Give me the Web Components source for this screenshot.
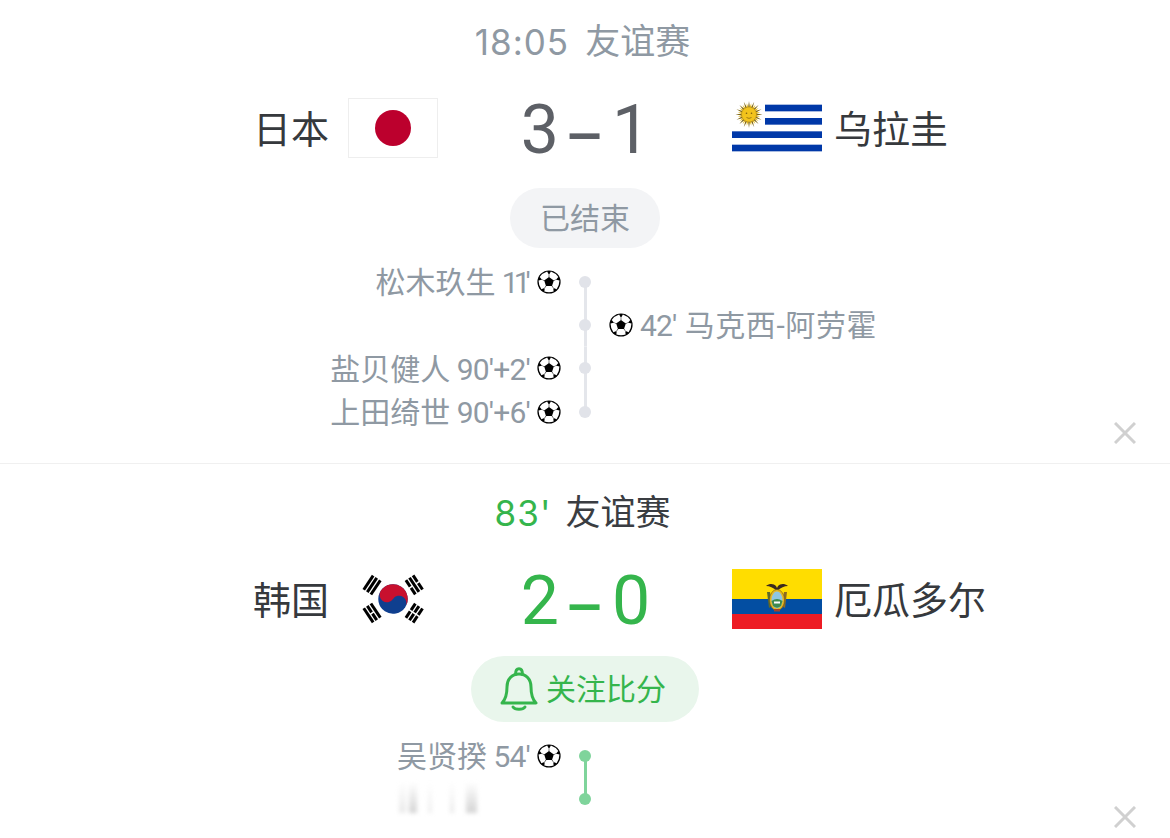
<!DOCTYPE html>
<html lang="zh">
<head>
<meta charset="utf-8">
<title>比分</title>
<style>
  html, body { margin: 0; height: 838px; overflow: hidden; background: #fff; }
  body { font-family: Roboto, "Noto Sans CJK SC", sans-serif; }
</style>
</head>
<body>
<match-card time="18:05" league="友谊赛" style="--pad-top: 21px; --pill-gap: 30px; --close-top: 422px; --card-h: 463px" divider>
  <team-side slot="home" side="home" name="日本"><country-flag code="jp"></country-flag></team-side>
  <score-line slot="score" home="3" away="1"></score-line>
  <team-side slot="away" side="away" name="乌拉圭"><country-flag code="uy"></country-flag></team-side>
  <status-pill slot="status">已结束</status-pill>
  <goal-row slot="events" side="home" minute="11'" first style="--min-track: -5px; --min-end: 4.2px">松木玖生</goal-row>
  <goal-row slot="events" side="away" minute="42'">马克西-阿劳霍</goal-row>
  <goal-row slot="events" side="home" minute="90'+2'">盐贝健人</goal-row>
  <goal-row slot="events" side="home" minute="90'+6'" last>上田绮世</goal-row>
</match-card>
<match-card time="83'" league="友谊赛" live style="--pad-top: 28px; --pill-gap: 27px; --close-top: 342px; --card-h: 374px; --head-gap: 14px">
  <team-side slot="home" side="home" name="韩国"><country-flag code="kr"></country-flag></team-side>
  <score-line slot="score" home="2" away="0"></score-line>
  <team-side slot="away" side="away" name="厄瓜多尔"><country-flag code="ec"></country-flag></team-side>
  <status-pill slot="status" follow>关注比分</status-pill>
  <goal-row slot="events" side="home" minute="54'" first>吴贤揆</goal-row>
  <goal-row slot="events" side="home" last ghost></goal-row>
</match-card>

<script>
const cjk = `"Noto Sans CJK SC", sans-serif`;

class MatchCard extends HTMLElement {
  constructor() {
    super();
    this.attachShadow({ mode: 'open' }).innerHTML = `
      <style>
        :host {
          display: block;
          position: relative;
          height: var(--card-h);
          --rail: #e4e6eb;
          --dot: #e1e3e9;
          font-family: Roboto, ${cjk};
        }
        :host([divider]) { border-bottom: 1px solid #f0f0f0; }
        :host([live]) { --rail: #7fd49b; --dot: #7fd49b; }
        .wrap { padding-top: var(--pad-top); display: flex; flex-direction: column; align-items: center; }
        header {
          box-sizing: border-box;
          height: 42px;
          padding: 2px 5px 0 0;
          line-height: 40px;
          font-size: 35px;
          color: #8f99a3;
          display: flex;
          gap: var(--head-gap, 16px);
          white-space: nowrap;
        }
        .time { font-family: Inter, ${cjk}; letter-spacing: 1px; line-height: 38px; }
        :host([live]) .time { color: #35b54c; }
        :host([live]) .league { color: #3a3d42; }
        .teams {
          margin-top: 35px;
          width: 100%;
          display: grid;
          grid-template-columns: 1fr 294px 1fr;
          grid-template-rows: 60px;
          align-items: center;
        }
        .status { margin-top: var(--pill-gap); }
        .events {
          margin-top: 12px;
          width: 100%;
          display: grid;
          grid-auto-rows: 43.33px;
        }
        .close {
          position: absolute;
          top: var(--close-top);
          right: 34px;
          width: 22px;
          height: 22px;
        }
      </style>
      <div class="wrap">
        <header><span class="time"></span><span class="league"></span></header>
        <div class="teams">
          <slot name="home"></slot>
          <slot name="score"></slot>
          <slot name="away"></slot>
        </div>
        <div class="status"><slot name="status"></slot></div>
        <div class="events"><slot name="events"></slot></div>
      </div>
      <svg class="close" viewBox="0 0 22 22"><path d="M1 1 21 21M21 1 1 21" stroke="#d0d0d0" stroke-width="3" fill="none"/></svg>`;
  }

  connectedCallback() {
    this.shadowRoot.querySelector('.time').textContent = this.getAttribute('time');
    this.shadowRoot.querySelector('.league').textContent = this.getAttribute('league');
  }
}

class TeamSide extends HTMLElement {
  constructor() {
    super();
    this.attachShadow({ mode: 'open' }).innerHTML = `
      <style>
        :host { display: flex; align-items: center; height: 60px; font-size: 38px; color: #36393d; white-space: nowrap; }
        :host([side="home"]) { justify-content: flex-end; gap: 19px; }
        :host([side="away"]) { flex-direction: row-reverse; justify-content: flex-end; gap: 12px; }
        .name { line-height: 44px; padding-top: 4px; }
      </style>
      <span class="name"></span><slot></slot>`;
  }

  connectedCallback() {
    this.shadowRoot.querySelector('.name').textContent = this.getAttribute('name');
  }
}

class ScoreLine extends HTMLElement {
  constructor() {
    super();
    this.attachShadow({ mode: 'open' }).innerHTML = `
      <style>
        :host {
          display: grid;
          box-sizing: border-box;
          height: 60px;
          padding-top: 4px;
          grid-template-columns: 1fr 30px 1fr;
          grid-template-rows: 56px;
          align-items: center;
          font-size: 68px;
          line-height: 56px;
          color: #5d6066;
        }
        :host-context(match-card[live]) { color: #35b54c; }
        .home { text-align: right; margin-right: 11px; }
        .away { text-align: left; margin-left: 12px; }
        .dash { text-align: center; font-size: 60px; font-weight: 500; padding-top: 14px; margin-left: -5px; }
      </style>
      <span class="home"></span><span class="dash">–</span><span class="away"></span>`;
  }

  connectedCallback() {
    this.shadowRoot.querySelector('.home').textContent = this.getAttribute('home');
    this.shadowRoot.querySelector('.away').textContent = this.getAttribute('away');
  }
}

class StatusPill extends HTMLElement {
  constructor() {
    super();
    this.attachShadow({ mode: 'open' }).innerHTML = `
      <style>
        :host {
          display: flex;
          box-sizing: border-box;
          align-items: center;
          justify-content: center;
          width: 150px;
          height: 60px;
          padding-bottom: 4px;
          border-radius: 30px;
          background: #f3f4f6;
          color: #8f99a3;
          font-size: 30px;
        }
        :host([follow]) {
          width: 228px;
          height: 66px;
          padding-right: 4px;
          border-radius: 33px;
          background: #e9f6ec;
          color: #35b54c;
          gap: 8px;
        }
        svg { display: none; width: 38px; height: 44px; margin-top: 4px; }
        :host([follow]) svg { display: block; }
      </style>
      <svg viewBox="0 0 38 44" fill="none" stroke="#35b54c" stroke-width="3" stroke-linejoin="round" stroke-linecap="round">
        <path d="M2 36 C6 32 7 28 7 20 C7 12 12 7 19 7 C26 7 31 12 31 20 C31 28 32 32 36 36 Z"/>
        <path d="M15.5 7.5 C15.5 3 17 1.7 19 1.7 C21 1.7 22.500 3 22.500 7.500"/>
        <path d="M13 40 C15 43 23 43 25 40"/>
      </svg>
      <slot></slot>`;
  }
}

class SoccerBall extends HTMLElement {
  constructor() {
    super();
    let patches = '';
    for (let i = 0; i < 5; i++) {
      patches += `<path d="M-4.600 -9.500 Q0 -11 4.600 -9.500 L4.300 -6.300 L2.600 -4.100 L-2.600 -4.100 L-4.300 -6.300Z" fill="#fff" transform="rotate(${i * 72 + 36})"/>`;
    }
    this.attachShadow({ mode: 'open' }).innerHTML = `
      <style>
        :host { display: block; width: 24px; height: 24px; flex: none; }
        svg { display: block; }
      </style>
      <svg width="24" height="24" viewBox="-12 -12 24 24">
        <circle r="11.600" fill="#000"/>
        ${patches}
      </svg>`;
  }
}

class GoalRow extends HTMLElement {
  constructor() {
    super();
    this.attachShadow({ mode: 'open' }).innerHTML = `
      <style>
        :host {
          display: grid;
          grid-template-columns: 1fr 48px 1fr;
          color: #8f99a3;
          font-size: 30px;
          white-space: nowrap;
        }
        .cell { display: flex; align-items: center; gap: 7px; }
        .left { justify-content: flex-end; }
        .txt { line-height: 36px; padding-top: 3px; }
        .min { letter-spacing: var(--min-track, -.8px); padding-right: var(--min-end, 0); }
        .left .min { margin-left: -1px; }
        .right .txt { letter-spacing: .6px; }
        .rail {
          display: flex;
          align-items: center;
          justify-content: center;
          background: linear-gradient(var(--rail), var(--rail)) center / 3px 100% no-repeat;
        }
        :host([first]) .rail { background-position: center bottom; background-size: 3px 50%; }
        :host([last]) .rail { background-position: center top; background-size: 3px 50%; }
        .dot { width: 12px; height: 12px; border-radius: 50%; background: var(--dot); }
        .ghost { width: 163px; height: 31px; align-self: flex-end; margin-bottom: 8px; position: relative; filter: blur(2px); }
        .ghost i { position: absolute; top: 0; bottom: 0; background: linear-gradient(#ffffff00, #d4d4d4); }
      </style>
      <div class="cell left"></div>
      <div class="rail"><span class="dot"></span></div>
      <div class="cell right"></div>`;
  }

  connectedCallback() {
    const left = this.shadowRoot.querySelector('.left');
    const right = this.shadowRoot.querySelector('.right');
    const minute = `<span class="min">${this.getAttribute('minute')}</span>`;
    if (this.hasAttribute('ghost')) {
      left.innerHTML = `<div class="ghost">
        <i style="left:1px;width:7px;opacity:.5"></i>
        <i style="left:11px;width:8px"></i>
        <i style="left:30px;width:4px;opacity:.4"></i>
        <i style="left:52px;width:4px;opacity:.5"></i>
        <i style="left:68px;width:11px"></i>
      </div>`;
    } else if (this.getAttribute('side') === 'home') {
      left.innerHTML = `<span class="txt"><slot></slot> ${minute}</span><soccer-ball></soccer-ball>`;
    } else {
      right.innerHTML = `<soccer-ball></soccer-ball><span class="txt">${minute} <slot></slot></span>`;
    }
  }
}

class CountryFlag extends HTMLElement {
  constructor() {
    super();
    this.attachShadow({ mode: 'open' });
  }

  connectedCallback() {
    const art = { jp: this.japan, uy: this.uruguay, kr: this.korea, ec: this.ecuador }[this.getAttribute('code')];
    this.shadowRoot.innerHTML = `
      <style>
        :host { display: block; width: 90px; height: 60px; flex: none; }
        svg { display: block; }
      </style>
      <svg width="90" height="60" viewBox="0 0 90 60">${art()}</svg>`;
  }

  japan() {
    return `<rect x=".5" y=".5" width="89" height="59" fill="#fff" stroke="#eeeeee"/>
      <circle cx="45" cy="30" r="18" fill="#bc002d"/>`;
  }

  uruguay() {
    let rays = '';
    for (let i = 0; i < 32; i++) {
      const long = i % 2 === 0;
      rays += `<path d="M-.9 -7 0 ${long ? -13.500 : -11.500} .9 -7Z" fill="${long ? '#7d6514' : '#e8bb1c'}" transform="rotate(${i * 11.25})"/>`;
    }
    return `<rect width="90" height="60" fill="#fff"/>
      <g fill="#0038a8">
        <rect x="33" y="6.670" width="57" height="6.670"/>
        <rect x="33" y="20" width="57" height="6.670"/>
        <rect y="33.330" width="90" height="6.670"/>
        <rect y="46.670" width="90" height="6.670"/>
      </g>
      <g transform="translate(17 16.500)">
        ${rays}
        <circle r="7.500" fill="#f2c31c" stroke="#b08a14" stroke-width=".6"/>
        <circle cx="-2.500" cy="-1.200" r=".8" fill="#7a5c10"/>
        <circle cx="2.500" cy="-1.200" r=".8" fill="#7a5c10"/>
        <path d="M-2.500 3Q0 4.800 2.500 3" stroke="#7a5c10" stroke-width=".7" fill="none"/>
      </g>`;
  }

  korea() {
    const bars = (x, pattern) => pattern.map((broken, i) => {
      const bx = x + i * 4.300;
      return broken
        ? `<rect x="${bx}" y="-8.500" width="3" height="7.700"/><rect x="${bx}" y=".8" width="3" height="7.700"/>`
        : `<rect x="${bx}" y="-8.500" width="3" height="17"/>`;
    }).join('');
    return `<rect width="90" height="60" fill="#fff"/>
      <g transform="translate(45 30)">
        <g transform="rotate(33.690)">
          <circle r="14.700" fill="#0f3f8f"/>
          <path d="M-14.700 0A14.700 14.700 0 0 1 14.700 0A7.350 7.350 0 0 0 0 0A7.350 7.350 0 0 1 -14.700 0Z" fill="#c8102e"/>
          <g fill="#000">${bars(-31, [0, 0, 0])}${bars(19.700, [1, 1, 1])}</g>
        </g>
        <g transform="rotate(-33.690)" fill="#000">
          ${bars(19.700, [1, 0, 1])}${bars(-31, [0, 1, 0])}
        </g>
      </g>`;
  }

  ecuador() {
    return `<rect width="90" height="30" fill="#ffdd00"/>
      <rect y="30" width="90" height="15" fill="#034ea2"/>
      <rect y="45" width="90" height="15" fill="#ed1c24"/>
      <g transform="translate(45 30)">
        <path d="M-11 -13 C-7 -16 -3 -15 -1 -13 L0 -11 L1 -13 C3 -15 7 -16 11 -13 C7 -13 4 -11 1 -9 L-1 -9 C-4 -11 -7 -13 -11 -13Z" fill="#3b2a1e"/>
        <path d="M-10 -7 -8 9 -5 7 -7 -7Z" fill="#5d6b2a"/>
        <path d="M10 -7 8 9 5 7 7 -7Z" fill="#8c6a24"/>
        <ellipse cx="0" cy="1" rx="7.500" ry="10.500" fill="#e8b923" stroke="#6b5216" stroke-width=".6"/>
        <ellipse cx="0" cy="1" rx="5.500" ry="8.500" fill="#8fc6e2"/>
        <path d="M-5.500 2 Q0 -2 5.500 2 L4 7 Q0 10.500 -4 7Z" fill="#3f8a4e"/>
        <rect x="-3" y="2.500" width="6" height="2" fill="#fff"/>
        <rect x="-3" y="10" width="6" height="2.500" fill="#a3432a"/>
      </g>`;
  }
}

window.customElements.define('match-card', MatchCard);
window.customElements.define('team-side', TeamSide);
window.customElements.define('score-line', ScoreLine);
window.customElements.define('status-pill', StatusPill);
window.customElements.define('soccer-ball', SoccerBall);
window.customElements.define('goal-row', GoalRow);
window.customElements.define('country-flag', CountryFlag);
</script>
</body>
</html>
